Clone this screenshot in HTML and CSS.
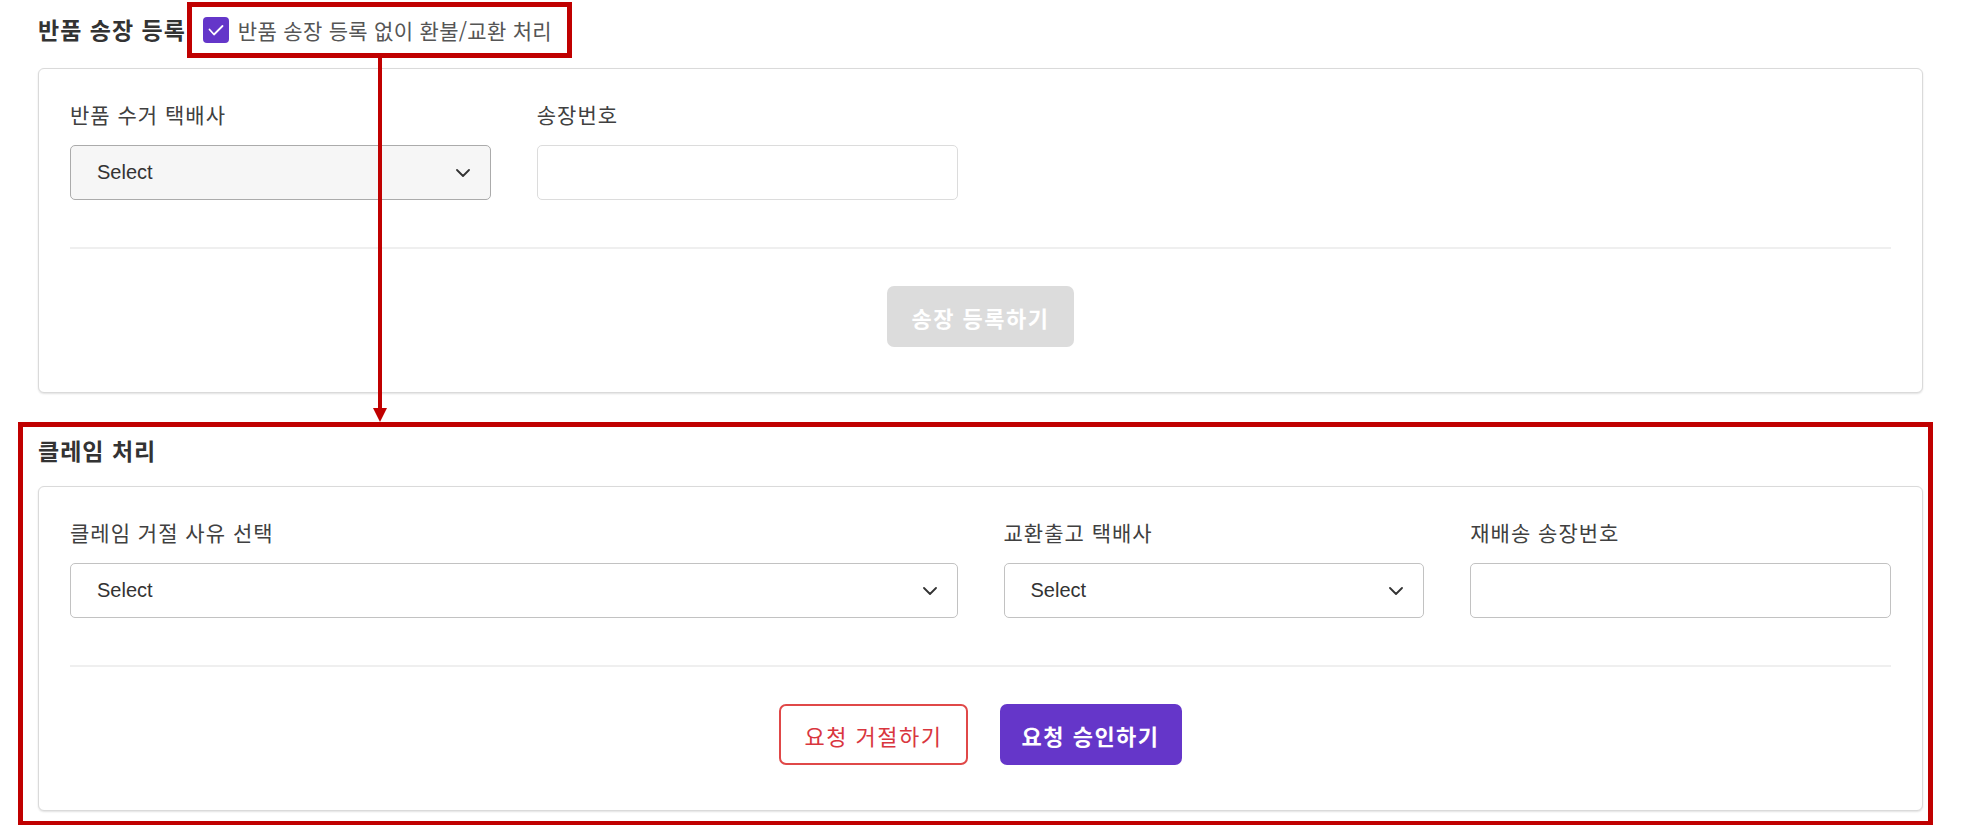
FILE: index.html
```html
<!DOCTYPE html>
<html lang="ko">
<head>
<meta charset="utf-8">
<title>클레임 처리</title>
<link rel="stylesheet" href="styles.css">
</head>
<body>
<div class="page">
  <section class="sec">
    <div class="sec-head">
      <h2 class="sec-title">반품 송장 등록</h2>
      <label class="check">
        <span class="checkbox">
          <svg viewBox="0 0 26 26" width="26" height="26"><polyline points="6.5,12.5 11,17.5 19.5,9" fill="none" stroke="#fff" stroke-width="1.8" stroke-linecap="round" stroke-linejoin="round"/></svg>
        </span>
        <span class="check-text">반품 송장 등록 없이 환불/교환 처리</span>
        <span class="annot annot-check"></span>
      </label>
    </div>
    <div class="card">
      <div class="card-body">
        <div class="field">
          <div class="label">반품 수거 택배사</div>
          <div class="select select-gray"><span>Select</span><svg class="chev" viewBox="0 0 14 8" width="14" height="8"><polyline points="1,1 7,7 13,1" fill="none" stroke="#333" stroke-width="1.8" stroke-linecap="round" stroke-linejoin="round"/></svg></div>
        </div>
        <div class="field">
          <div class="label">송장번호</div>
          <div class="input input-light"></div>
        </div>
      </div>
      <div class="divider"></div>
      <div class="actions">
        <button class="btn btn-disabled">송장 등록하기</button>
      </div>
    </div>
  </section>

  <section class="sec claim">
    <span class="annot annot-claim"></span>
    <div class="sec-head sec-head-claim">
      <h2 class="sec-title">클레임 처리</h2>
    </div>
    <div class="card">
      <div class="card-body">
        <div class="field span2">
          <div class="label">클레임 거절 사유 선택</div>
          <div class="select"><span>Select</span><svg class="chev" viewBox="0 0 14 8" width="14" height="8"><polyline points="1,1 7,7 13,1" fill="none" stroke="#333" stroke-width="1.8" stroke-linecap="round" stroke-linejoin="round"/></svg></div>
        </div>
        <div class="field">
          <div class="label">교환출고 택배사</div>
          <div class="select"><span>Select</span><svg class="chev" viewBox="0 0 14 8" width="14" height="8"><polyline points="1,1 7,7 13,1" fill="none" stroke="#333" stroke-width="1.8" stroke-linecap="round" stroke-linejoin="round"/></svg></div>
        </div>
        <div class="field">
          <div class="label">재배송 송장번호</div>
          <div class="input"></div>
        </div>
      </div>
      <div class="divider"></div>
      <div class="actions">
        <button class="btn btn-reject">요청 거절하기</button>
        <button class="btn btn-approve">요청 승인하기</button>
      </div>
    </div>
  </section>

  <svg class="arrow" viewBox="0 0 14 364" width="14" height="364">
    <rect x="5" y="0" width="4" height="352" fill="#c00000"/>
    <polygon points="0,350 14,350 7,364" fill="#c00000"/>
  </svg>
</div>
</body>
</html>
```
FILE: styles.css
```css
* { box-sizing: border-box; }
html, body { margin: 0; padding: 0; background: #fff; }
body {
  font-family: "Noto Sans CJK KR", "Noto Sans", sans-serif;
  color: #333;
}
.page {
  position: relative;
  padding: 0 41px 15px 38px;
}
.sec-head {
  display: flex;
  align-items: center;
  height: 60px;
  margin-bottom: 8px;
}
.sec-title {
  margin: 0 0 3px;
  font-size: 23px;
  font-weight: 700;
  letter-spacing: 1px;
  line-height: 32px;
  color: #333;
}
.check {
  position: relative;
  display: flex;
  align-items: center;
  gap: 9px;
  margin-left: 17px;
}
.checkbox {
  display: block;
  width: 26px;
  height: 26px;
  border-radius: 4px;
  background: #6436c9;
}
.checkbox svg { display: block; }
.check-text {
  font-size: 21px;
  letter-spacing: 0.3px;
  line-height: 26px;
  color: #555;
}
.annot {
  position: absolute;
  border: 5px solid #c00000;
  pointer-events: none;
}
.annot-check {
  left: -16px;
  right: -20px;
  top: -15px;
  bottom: -15px;
}
.card {
  background: #fff;
  border: 1px solid #dadada;
  border-radius: 6px;
  box-shadow: 0 1px 2px rgba(0, 0, 0, 0.12);
}
.card-body {
  display: grid;
  grid-template-columns: repeat(4, 1fr);
  column-gap: 46px;
  padding: 32px 31px 47px;
}
.field {
  display: flex;
  flex-direction: column;
  gap: 18px;
}
.span2 { grid-column: span 2; }
.label {
  font-size: 21px;
  letter-spacing: 1px;
  line-height: 26px;
  color: #404040;
}
.select, .input {
  height: 55px;
  border-radius: 5px;
  background: #fff;
}
.select {
  display: flex;
  align-items: center;
  justify-content: space-between;
  padding: 0 20px 0 26px;
  border: 1px solid #c2c2c2;
  font-family: "Liberation Sans", "Noto Sans CJK KR", sans-serif;
  font-size: 20px;
  color: #333;
}
.select-gray {
  background: #f6f6f6;
  border-color: #ababab;
}
.chev { display: block; }
.input {
  border: 1px solid #c2c2c2;
}
.input-light {
  border-color: #dcdcdc;
}
.divider {
  height: 2px;
  margin: 0 31px;
  background: #efefef;
}
.actions {
  display: flex;
  justify-content: center;
  gap: 32px;
  padding: 37px 0 45px;
}
.btn {
  height: 61px;
  padding: 0 24px;
  border: none;
  border-radius: 7px;
  font-family: "Noto Sans CJK KR", sans-serif;
  font-size: 22px;
  letter-spacing: 1.5px;
  line-height: 1;
}
.btn-disabled {
  background: #dcdcdc;
  color: #fff;
  font-weight: 700;
}
.btn-reject {
  background: #fff;
  border: 2px solid #e04848;
  color: #d9363e;
  font-weight: 400;
  padding: 0 23px;
}
.btn-approve {
  background: #6536c9;
  color: #fff;
  font-weight: 700;
  padding: 0 22px;
}
.claim {
  position: relative;
  margin-top: 29px;
}
.sec-head-claim {
  height: 64px;
  padding-bottom: 6px;
  margin-bottom: 0;
}
.annot-claim {
  left: -20px;
  right: -10px;
  top: 0;
  bottom: -15px;
}
.arrow {
  position: absolute;
  left: 373px;
  top: 58px;
  display: block;
}
```
